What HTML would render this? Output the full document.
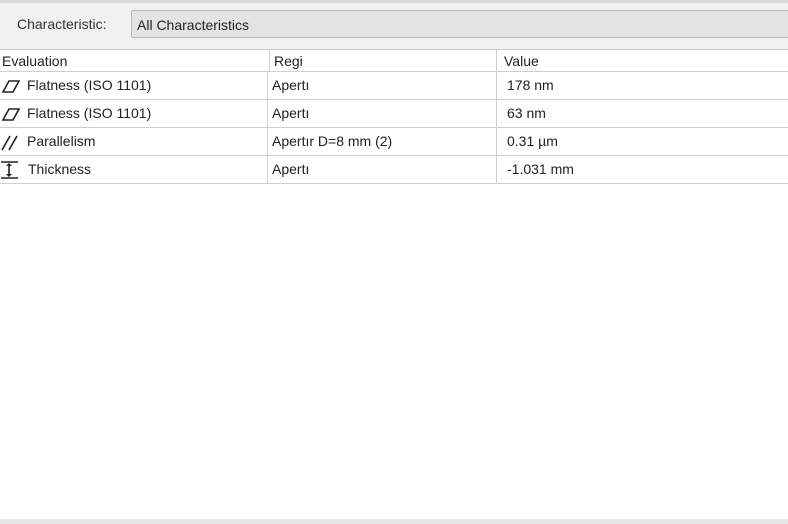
<!DOCTYPE html>
<html><head><meta charset="utf-8"><style>
body{margin:0;width:788px;height:524px;overflow:hidden;background:#fff;font-family:"Liberation Sans",sans-serif;font-size:14px;color:#222;position:relative}
.top{position:absolute;left:0;top:0;width:788px;height:49px;background:#f0f0f0;border-top:3px solid #d8d8d8;box-sizing:border-box}
.lbl{position:absolute;left:17px;top:13px;color:#333}
.combo{position:absolute;left:131px;top:7px;width:670px;height:28px;background:#e3e3e3;border:1px solid #b8b8b8;box-sizing:border-box;border-radius:2px}
.combo span{position:absolute;left:5px;top:6px}
.row{position:absolute;left:0;width:788px;height:28px;border-bottom:1px solid #cfcfcf;box-sizing:border-box}
.c{position:absolute;top:0;height:100%;line-height:27px;white-space:nowrap;overflow:hidden}
.c1{left:0;width:267px;border-right:1px solid #cfcfcf}
.c2{left:268px;width:229px;border-right:1px solid #cfcfcf;padding-left:4px;box-sizing:border-box}
.c3{left:498px;padding-left:9px}
.ic{position:absolute;left:1px;top:6px}
.t{position:absolute;left:27px}
.bot{position:absolute;left:0;top:519px;width:788px;height:5px;background:#e6e6e6}
</style></head><body>
<div class="top"><div class="lbl">Characteristic:</div><div class="combo"><span>All Characteristics</span></div></div>
<div class="row" style="top:49px;height:23px;border-top:1px solid #cfcfcf"><div class="c c1" style="line-height:22px;padding-left:2px">Evaluation</div><div class="c c2" style="line-height:22px;padding-left:6px">Regi</div><div class="c c3" style="line-height:22px;padding-left:6px">Value</div></div>
<div class="row" style="top:72px"><div class="c c1"><svg class="ic" width="20" height="16"><path d="M2 14 L8 3 L18 3 L12 14 Z" fill="none" stroke="#222" stroke-width="1.6"/></svg><span class="t">Flatness (ISO 1101)</span></div><div class="c c2">Apertı</div><div class="c c3">178 nm</div></div>
<div class="row" style="top:100px"><div class="c c1"><svg class="ic" width="20" height="16"><path d="M2 14 L8 3 L18 3 L12 14 Z" fill="none" stroke="#222" stroke-width="1.6"/></svg><span class="t">Flatness (ISO 1101)</span></div><div class="c c2">Apertı</div><div class="c c3">63 nm</div></div>
<div class="row" style="top:128px"><div class="c c1"><svg class="ic" width="20" height="18"><path d="M1 16 L9 2 M8 16 L16 2" fill="none" stroke="#222" stroke-width="1.6"/></svg><span class="t">Parallelism</span></div><div class="c c2">Apertır D=8 mm (2)</div><div class="c c3">0.31 µm</div></div>
<div class="row" style="top:156px"><div class="c c1"><svg class="ic" style="top:4px" width="20" height="20"><path d="M0 2 H17 M0 18 H17 M8 4 V16" stroke="#222" stroke-width="1.6" fill="none"/><path d="M5 6 L8 3 L11 6 Z M5 14 L8 17 L11 14 Z" fill="#222"/></svg><span class="t" style="left:28px">Thickness</span></div><div class="c c2">Apertı</div><div class="c c3">-1.031 mm</div></div>
<div class="bot"></div>
</body></html>
